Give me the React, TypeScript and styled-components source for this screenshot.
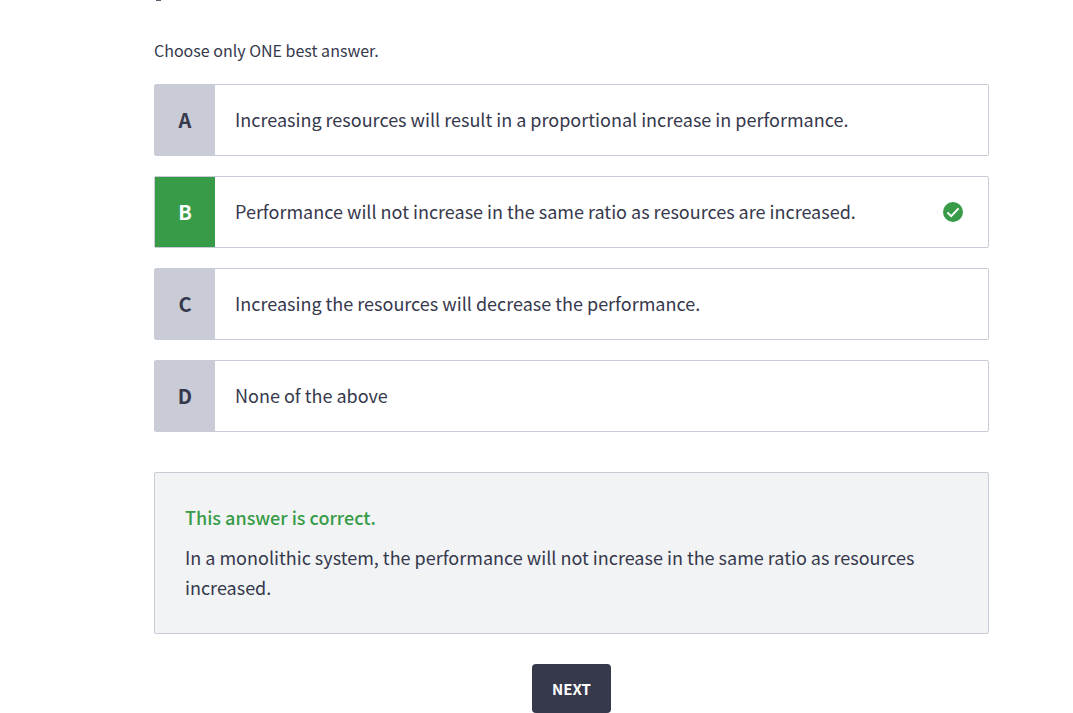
import React, { useState } from "react";
import styled, { createGlobalStyle } from "styled-components";

const GlobalStyle = createGlobalStyle`
  *, *::before, *::after { box-sizing: border-box; }
  body {
    margin: 0;
    background: #ffffff;
    color: #36384c;
    font-family: "Noto Sans CJK SC", "Open Sans", sans-serif;
    font-size: 18px;
    line-height: 30px;
  }
`;

const Page = styled.main`
  display: flex;
  flex-direction: column;
  padding: 0 84px 0 154px;
`;

const Descender = styled.div`
  width: 5px;
  height: 1px;
  margin-left: 2px;
  background: #5b5c6c;
`;

const Question = styled.fieldset`
  min-width: 0;
  margin: 35px 0 0;
  padding: 0;
  border: 0;
`;

const Hint = styled.legend`
  padding: 0;
  font-size: 16px;
  line-height: 28px;
`;

const Options = styled.div`
  display: flex;
  flex-direction: column;
  gap: 20px;
  margin-top: 20px;
`;

const Option = styled.label`
  position: relative;
  display: flex;
  min-height: 72px;
  border: 1px solid #c9ccd6;
  border-radius: 2px;
  cursor: pointer;
`;

const Radio = styled.input`
  position: absolute;
  inset: 0;
  margin: 0;
  opacity: 0;
  cursor: pointer;
`;

const Letter = styled.span<{ $correct: boolean }>`
  display: flex;
  flex: 0 0 60px;
  align-items: center;
  justify-content: center;
  background: ${(p) => (p.$correct ? "#389b48" : "#c9ccd6")};
  color: ${(p) => (p.$correct ? "#ffffff" : "#36384c")};
  font-size: 20px;
  font-weight: 700;
`;

const Answer = styled.span`
  flex: 1;
  align-self: center;
  padding: 0 20px 2px;
`;

const Tick = styled.svg`
  flex: none;
  align-self: center;
  width: 20px;
  height: 20px;
  margin-right: 25px;
`;

const Explanation = styled.section`
  margin-top: 40px;
  padding: 29px 30px 31px;
  border: 1px solid #c9ccd6;
  border-radius: 2px;
  background: #f1f3f5;
`;

const Verdict = styled.h2`
  margin: 0 0 10px;
  color: #389b48;
  font-size: 18px;
  font-weight: 500;
`;

const Reason = styled.p`
  margin: 0;
`;

const NextButton = styled.button`
  align-self: center;
  height: 49px;
  margin-top: 30px;
  padding: 0 20px;
  border: 0;
  border-radius: 4px;
  background: #36384c;
  color: #ffffff;
  font-family: inherit;
  font-size: 15px;
  font-weight: 700;
  cursor: pointer;
`;

const answers = [
  { id: "A", text: "Increasing resources will result in a proportional increase in performance." },
  { id: "B", text: "Performance will not increase in the same ratio as resources are increased." },
  { id: "C", text: "Increasing the resources will decrease the performance." },
  { id: "D", text: "None of the above" },
];

const correctId = "B";

export default function App() {
  const [selected, setSelected] = useState(correctId);

  return (
    <>
      <GlobalStyle />
      <Page>
        <Descender />
        <Question>
          <Hint>Choose only ONE best answer.</Hint>
          <Options>
            {answers.map(({ id, text }) => {
              const correct = id === correctId && selected === id;
              return (
                <Option key={id}>
                  <Radio
                    type="radio"
                    name="answer"
                    value={id}
                    checked={selected === id}
                    onChange={() => setSelected(id)}
                  />
                  <Letter $correct={correct}>{id}</Letter>
                  <Answer>{text}</Answer>
                  {correct && (
                    <Tick viewBox="0 0 20 20" aria-hidden="true">
                      <circle cx="10" cy="10" r="10" fill="#389b48" />
                      <path d="M4.4 10.6 L8.2 14.2 L15.6 6.4" fill="none" stroke="#ffffff" strokeWidth="2" />
                    </Tick>
                  )}
                </Option>
              );
            })}
          </Options>
        </Question>
        <Explanation>
          <Verdict>This answer is correct.</Verdict>
          <Reason>
            In a monolithic system, the performance will not increase in the same ratio as resources increased.
          </Reason>
        </Explanation>
        <NextButton type="button">NEXT</NextButton>
      </Page>
    </>
  );
}
